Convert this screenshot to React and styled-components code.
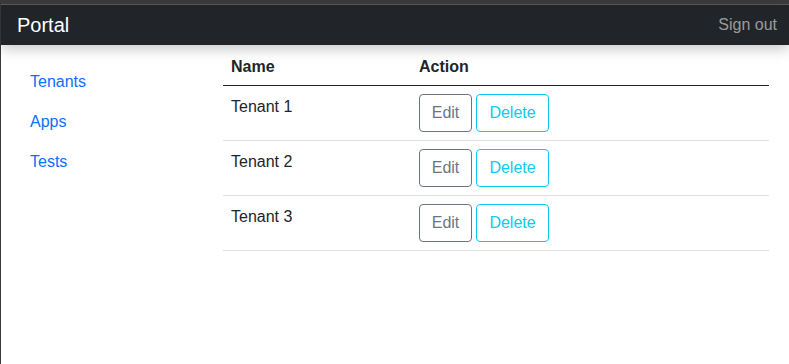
import React from "react";
import styled, { createGlobalStyle } from "styled-components";

const colors = {
  dark: "#212529",
  link: "#0d6efd",
  secondary: "#6c757d",
  info: "#0dcaf0",
  rowBorder: "#dee2e6",
};

const GlobalStyle = createGlobalStyle`
  html, body {
    margin: 0;
    padding: 0;
    background: #fff;
  }
  body {
    font-family: "Liberation Sans", Arial, sans-serif;
    font-size: 16px;
    line-height: 24px;
    color: ${colors.dark};
  }
`;

const Frame = styled.div`
  min-height: 364px;
  border-top: 4px solid #3c3c3c;
  border-left: 1px solid #3a3a3a;
  box-sizing: border-box;
  display: flex;
  flex-direction: column;
  &::before {
    content: "";
    display: block;
    height: 1px;
    background: #5c5c5c;
  }
`;

const Navbar = styled.header`
  height: 40px;
  background: ${colors.dark};
  display: flex;
  align-items: center;
  justify-content: space-between;
  padding: 0 12px 0 16px;
  box-shadow: 0 4px 14px rgba(0, 0, 0, 0.22);
  position: relative;
  z-index: 1;
`;

const Brand = styled.a`
  color: #fff;
  font-size: 20px;
  line-height: 30px;
  text-decoration: none;
`;

const SignOut = styled.a`
  color: rgba(255, 255, 255, 0.55);
  text-decoration: none;
`;

const Body = styled.div`
  display: flex;
  flex: 1;
`;

const Sidebar = styled.nav`
  width: 222px;
  padding: 17px 0 0 13px;
  box-sizing: border-box;
  display: flex;
  flex-direction: column;
`;

const NavLink = styled.a`
  color: ${colors.link};
  text-decoration: none;
  padding: 8px 16px;
`;

const Main = styled.main`
  flex: 1;
  padding-right: 20px;
`;

const Table = styled.table`
  width: 100%;
  border-collapse: collapse;
`;

const Th = styled.th`
  text-align: left;
  font-weight: 700;
  padding: 10px 8px 6px;
  border-bottom: 1px solid ${colors.dark};
  width: ${(p) => p.$width || "auto"};
`;

const Td = styled.td`
  padding: ${(p) => (p.$text ? "9px 8px 7px" : "8px")};
  vertical-align: top;
  border-bottom: 1px solid ${colors.rowBorder};
`;

const Actions = styled.div`
  display: flex;
  gap: 4px;
`;

const Button = styled.button`
  font-family: inherit;
  font-size: 16px;
  line-height: 24px;
  width: ${(p) => p.$width};
  padding: 6px 0;
  text-align: center;
  background: transparent;
  border-radius: 4px;
  border: 1px solid ${(p) => p.$color};
  color: ${(p) => p.$color};
  cursor: pointer;
`;

const tenants = ["Tenant 1", "Tenant 2", "Tenant 3"];

const App = () => (
  <>
    <GlobalStyle />
    <Frame>
      <Navbar>
        <Brand href="#">Portal</Brand>
        <SignOut href="#">Sign out</SignOut>
      </Navbar>
      <Body>
        <Sidebar>
          <NavLink href="#">Tenants</NavLink>
          <NavLink href="#">Apps</NavLink>
          <NavLink href="#">Tests</NavLink>
        </Sidebar>
        <Main>
          <Table>
            <thead>
              <tr>
                <Th $width="172px">Name</Th>
                <Th>Action</Th>
              </tr>
            </thead>
            <tbody>
              {tenants.map((name) => (
                <tr key={name}>
                  <Td $text>{name}</Td>
                  <Td>
                    <Actions>
                      <Button $color={colors.secondary} $width="53px">
                        Edit
                      </Button>
                      <Button $color={colors.info} $width="73px">
                        Delete
                      </Button>
                    </Actions>
                  </Td>
                </tr>
              ))}
            </tbody>
          </Table>
        </Main>
      </Body>
    </Frame>
  </>
);

export default App;
